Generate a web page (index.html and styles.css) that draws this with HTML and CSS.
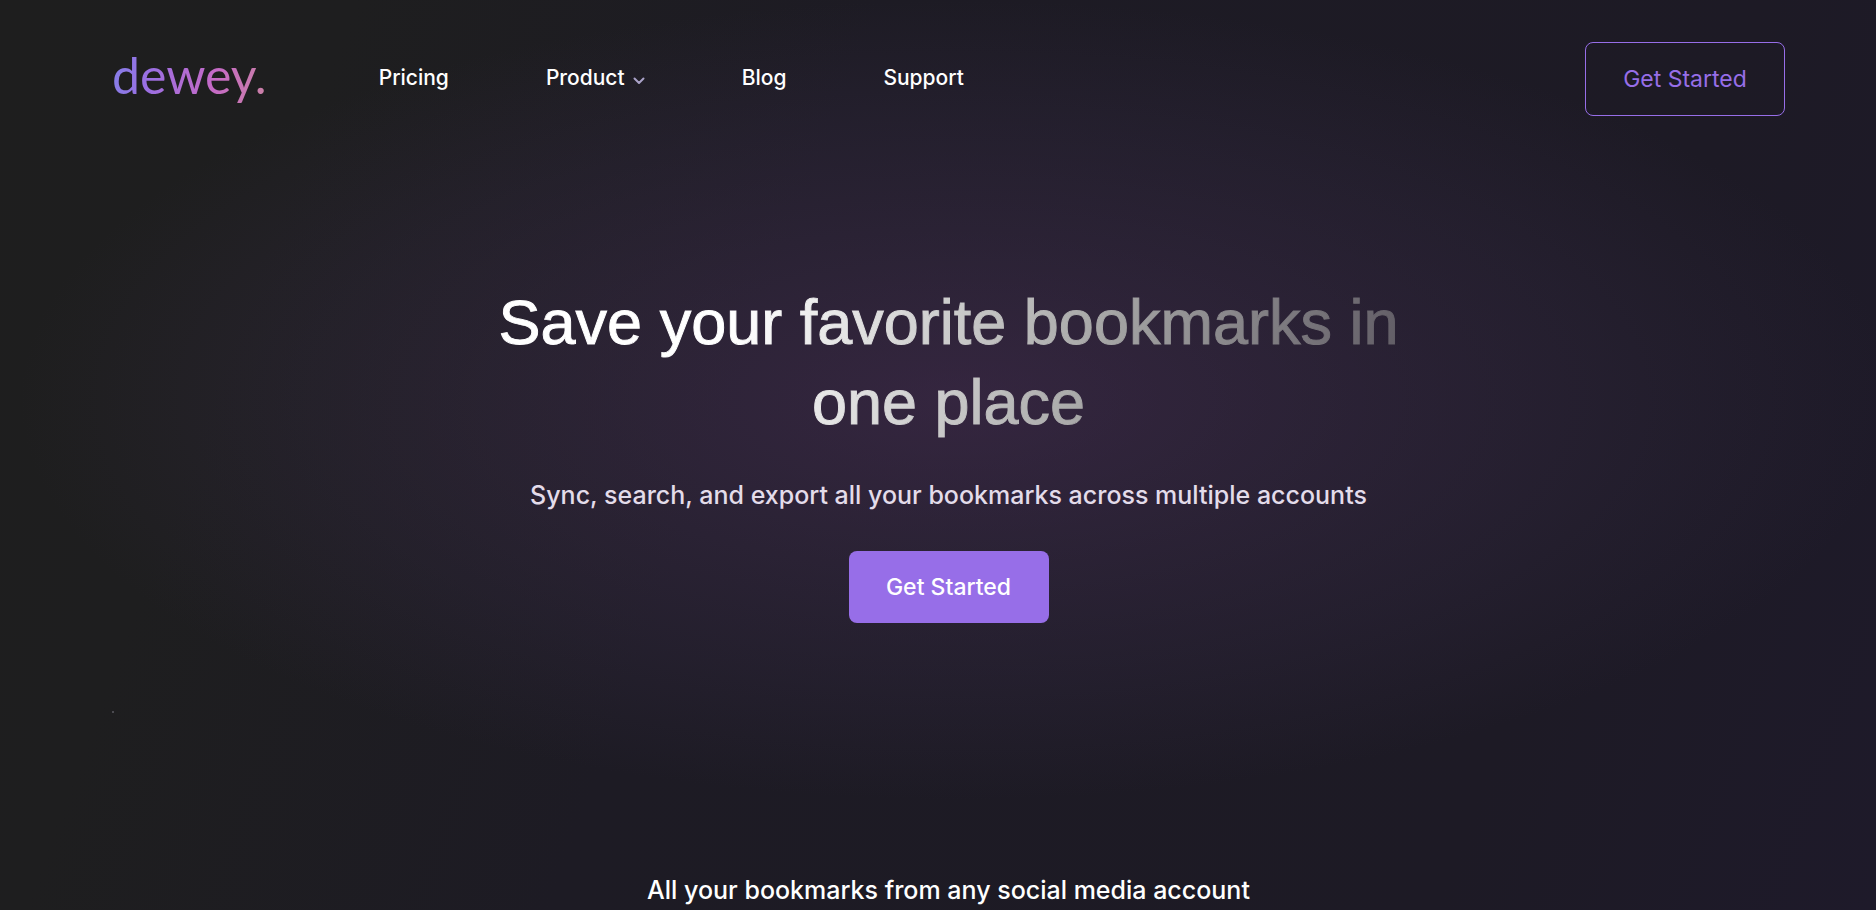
FILE: index.html
```html
<!DOCTYPE html>
<html lang="en">
<head>
    <meta charset="UTF-8">
    <meta name="viewport" content="width=device-width, initial-scale=1.0">
    <title>dewey.</title>
    <link rel="stylesheet" href="styles.css">
</head>
<body>
    <div class="page">
        <header class="header">
            <a href="#" class="logo">dewey.</a>
            <nav class="nav">
                <a href="#pricing">Pricing</a>
                <button type="button" class="nav-dropdown">
                    Product
                    <svg class="chevron" viewBox="0 0 12 8" fill="none" aria-hidden="true">
                        <path d="M1.5 1.5L6 6L10.5 1.5" stroke="currentColor" stroke-width="2" stroke-linecap="round" stroke-linejoin="round"/>
                    </svg>
                </button>
                <a href="#blog">Blog</a>
                <a href="#support">Support</a>
            </nav>
            <a href="#start" class="btn btn-outline">Get Started</a>
        </header>
        <main>
            <section class="hero">
                <h1>Save your favorite bookmarks in one place</h1>
                <p>Sync, search, and export all your bookmarks across multiple accounts</p>
                <a href="#start" class="btn btn-primary">Get Started</a>
            </section>
            <div class="dot"></div>
            <section class="accounts">
                <h2>All your bookmarks from any social media account</h2>
            </section>
        </main>
    </div>
</body>
</html>
```

FILE: styles.css
```css
* {
    box-sizing: border-box;
}
html {
    background-color: #1d1b26;
}
body {
    margin: 0;
    font-family: 'Inter', sans-serif;
    color: #fff;
}
a {
    color: inherit;
    text-decoration: none;
}
.page {
    min-height: 100vh;
    padding: 42px 91px 0 112px;
    background:
        radial-gradient(ellipse 50% 400px at 51% 400px, rgba(88, 54, 104, 0.4), rgba(80, 54, 98, 0.29) 35%, rgba(60, 46, 78, 0.22) 70%, rgba(50, 35, 60, 0) 100%),
        linear-gradient(110deg, #1e1e1e 0%, #1e1e1f 16%, #1d1b24 40%, #1d1a25 80%, #1e1a2a 100%);
}
.header {
    display: flex;
    align-items: center;
}
.logo {
    padding-bottom: 8px;
    font-family: 'Lato', sans-serif;
    font-size: 50px;
    line-height: 60px;
    background: linear-gradient(100deg, #8480e8 0%, #9a6fe3 25%, #c56ac6 65%, #cb82a4 100%);
    -webkit-background-clip: text;
    background-clip: text;
    color: transparent;
}
.nav {
    display: flex;
    align-items: center;
    gap: 97px;
    margin-left: 112px;
    padding-bottom: 2px;
}
.nav a, .nav-dropdown {
    font-size: 21px;
    font-weight: 500;
    line-height: 28px;
}
.nav-dropdown {
    display: flex;
    align-items: center;
    gap: 8px;
    padding: 0;
    border: none;
    background: none;
    color: inherit;
    font-family: inherit;
    cursor: pointer;
}
.chevron {
    width: 12px;
    height: 8px;
    margin-top: 6px;
    color: #aaa2c8;
}
.btn {
    display: flex;
    align-items: center;
    justify-content: center;
    width: 200px;
    border-radius: 8px;
    font-size: 23px;
}
.btn-outline {
    height: 74px;
    margin-left: auto;
    border: 1px solid #976ee8;
    color: #976ee8;
}
.btn-primary {
    height: 72px;
    background-color: #976ee8;
    font-weight: 500;
}
.hero {
    display: flex;
    flex-direction: column;
    align-items: center;
    padding-top: 166px;
    text-align: center;
}
h1 {
    max-width: 980px;
    margin: 0;
    font-family: 'Liberation Sans', Arial, sans-serif;
    font-size: 63px;
    font-weight: 400;
    line-height: 80px;
    background: linear-gradient(100deg, #fff 28%, #ddd 42%, #a5a5a5 65%, #55505a 100%);
    -webkit-background-clip: text;
    background-clip: text;
    color: transparent;
    -webkit-text-stroke: 1px transparent;
}
.hero p {
    margin: 35px 0 38px;
    font-size: 25px;
    font-weight: 500;
    line-height: 36px;
    color: #e3dcea;
}
.dot {
    width: 2px;
    height: 2px;
    margin-top: 88px;
    background-color: #4b4a50;
}
.accounts {
    padding-top: 160px;
    text-align: center;
}
h2 {
    margin: 0;
    font-size: 25px;
    font-weight: 500;
    line-height: 34px;
}
```
